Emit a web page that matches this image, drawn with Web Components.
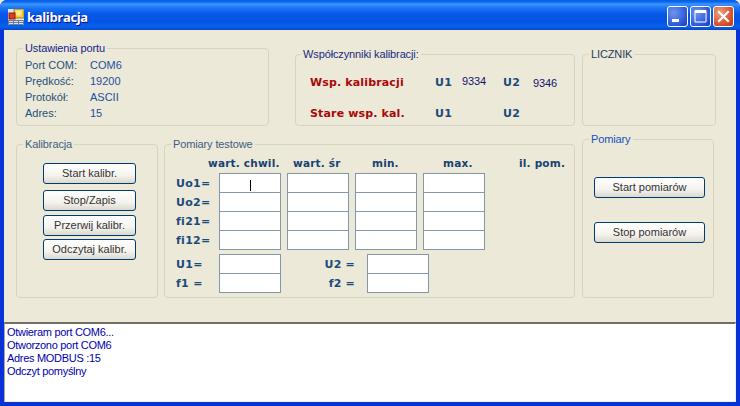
<!DOCTYPE html>
<html><head><meta charset="utf-8"><style>
html,body{margin:0;padding:0;background:#ece9d8}
body{width:740px;height:406px;overflow:hidden;font:11px/16px "Liberation Sans",Arial,sans-serif}
</style></head><body>
<xp-window title-text="kalibracja">
  <xp-row style="--h:79px;--top:18px">
    <xp-group legend="Ustawienia portu" style="--x:12px;--w:253px;--ht:78px;--lc:#14248a">
      <xp-port></xp-port>
    </xp-group>
    <xp-group legend="Współczynniki kalibracji:" style="--x:26px;--w:280px;--ht:72px;--mt:6px;--lc:#1a2a80;--lx:5px">
      <xp-coeffs></xp-coeffs>
    </xp-group>
    <xp-group legend="LICZNIK" style="--x:7px;--w:134px;--ht:72px;--mt:6px;--lc:#2a3a5a"></xp-group>
  </xp-row>
  <xp-row style="--h:159px;--top:12px">
    <xp-group legend="Kalibracja" style="--x:12px;--w:142px;--ht:154px;--mt:5px;--lc:#3d5f80">
      <xp-stack style="--pl:26px;--pt:18px">
        <xp-btn style="--w:93px;--mt:0px">Start kalibr.</xp-btn>
        <xp-btn style="--w:93px;--mt:6px">Stop/Zapis</xp-btn>
        <xp-btn style="--w:93px;--mt:4px">Przerwij kalibr.</xp-btn>
        <xp-btn style="--w:93px;--mt:3px">Odczytaj kalibr.</xp-btn>
      </xp-stack>
    </xp-group>
    <xp-group legend="Pomiary testowe" style="--x:6px;--w:411px;--ht:154px;--mt:5px;--lc:#3d5f80">
      <xp-tests></xp-tests>
    </xp-group>
    <xp-group legend="Pomiary" style="--x:7px;--w:132px;--ht:159px;--lc:#1550c0">
      <xp-stack style="--pl:11px;--pt:37px">
        <xp-btn style="--w:111px">Start pomiarów</xp-btn>
        <xp-btn style="--w:111px;--mt:24px">Stop pomiarów</xp-btn>
      </xp-stack>
    </xp-group>
  </xp-row>
  <xp-log slot="log">
    <div>Otwieram port COM6...</div>
    <div>Otworzono port COM6</div>
    <div>Adres MODBUS :15</div>
    <div>Odczyt pomyślny</div>
  </xp-log>
</xp-window>
<script>
function def(name,css,html,init){
  customElements.define(name,class extends HTMLElement{
    constructor(){super();const r=this.attachShadow({mode:"open"});
      r.innerHTML="<style>"+css+"</style>"+(typeof html==="function"?html(this):html);}
    connectedCallback(){if(init)init(this)}
  });
}
def("xp-window",`
:host{display:flex;flex-direction:column;width:740px;height:406px;box-sizing:border-box;background:#0831d9;border-radius:7px 7px 0 0;overflow:hidden}
.t{flex:none;height:30px;display:flex;align-items:center;padding:0 6px 0 8px;
 background:linear-gradient(#0a5ae0 0,#0a6af0 2px,#3c95ff 4px,#1a74f4 8px,#0858e8 14px,#0454e4 22px,#0662f0 26px,#0a50d8 29px,#0a40c0 30px);
 color:#fff;font:bold 13px/16px "Open Sans","Liberation Sans",sans-serif;letter-spacing:-.35px;text-shadow:1px 1px #0f1089}
.t svg.i{flex:none;margin-right:3px;margin-top:3px}
.t span{flex:1;margin-top:4px}
.b{flex:none;width:21px;height:21px;margin-left:2px;box-sizing:border-box;border:1px solid #fff;border-radius:3px;margin-top:2px;display:block;
 background:radial-gradient(circle at 30% 30%,#6f96ee,#2a56d8 70%,#1c3fb8)}
.b.c{background:radial-gradient(circle at 30% 30%,#eea080,#d8502c 65%,#b83c18)}
.b svg{display:block}
.f{flex:1;display:flex;flex-direction:column;margin:0 4px 4px;background:#ece9d8;min-height:0}
.m{flex:none;height:292px;display:flex;flex-direction:column}
`,h=>`<div class="t"><svg class="i" width="16" height="16" viewBox="0 0 16 16">
<rect x="0" y="0" width="16" height="16" fill="#dfe6ee"/>
<rect x="6" y="0" width="10" height="9" fill="#f7c83a" stroke="#a8801c"/>
<rect x="7.5" y="1.5" width="6" height="5" fill="#ffe98a"/>
<rect x="1" y="4" width="6" height="6" fill="#e03a22" stroke="#8a2010"/>
<path d="M0.5 11.5H15.5V15.5H0.5ZM5.5 11.5V15.5M10.5 11.5V15.5M0.5 13.5H15.5" fill="#d8e0ea" stroke="#6a7c98"/>
</svg><span>${h.getAttribute("title-text")}</span>
<i class="b"><svg width="19" height="19"><rect x="4" y="12" width="7" height="3" fill="#fff"/></svg></i>
<i class="b"><svg width="19" height="19"><path d="M4 3.5H15V15H4Z M4.5 5.5H14.5" fill="none" stroke="#fff" stroke-width="1"/><rect x="4" y="3" width="11" height="3" fill="#fff"/></svg></i>
<i class="b c"><svg width="19" height="19"><path d="M5 5L14 14M14 5L5 14" stroke="#fff" stroke-width="2.2" stroke-linecap="square" fill="none"/></svg></i>
</div><div class="f"><div class="m"><slot></slot></div><slot name="log"></slot></div>`);
def("xp-row",`:host{display:flex;flex:none;height:var(--h);padding-top:var(--top);box-sizing:content-box}`,`<slot></slot>`);
def("xp-group",`
:host{display:block;flex:none;position:relative;box-sizing:border-box;width:var(--w);height:var(--ht);margin-left:var(--x);margin-top:var(--mt,0);border:1px solid #d6d3c0;border-radius:4px}
.l{position:absolute;left:var(--lx,6px);top:-8px;padding:0 2px;background:#ece9d8;color:var(--lc);white-space:nowrap;line-height:14px;letter-spacing:-.12px}
`,h=>`<div class="l">${h.getAttribute("legend")}</div><slot></slot>`);
def("xp-stack",`:host{display:flex;flex-direction:column;align-items:flex-start;padding:var(--pt) 0 0 var(--pl)}`,`<slot></slot>`);
def("xp-btn",`
:host{display:block;flex:none;box-sizing:border-box;width:var(--w);height:21px;margin-top:var(--mt,0);border:1px solid #003c74;border-radius:3px;
 background:linear-gradient(#fff,#f4f3ee 60%,#dcd8cc);text-align:center;line-height:19px;color:#333;white-space:nowrap}
`,`<slot></slot>`);
def("xp-port",`
:host{display:grid;grid-template-columns:65px auto;grid-auto-rows:16px;padding:8px 0 0 8px;color:#23527c}
b{font-weight:400;color:#1e4ea0}`,
`<span>Port COM:</span><b>COM6</b><span>Prędkość:</span><b>19200</b><span>Protokół:</span><b>ASCII</b><span>Adres:</span><b>15</b>`);
def("xp-coeffs",`
:host{display:grid;grid-template-columns:125px 27px 41px 30px auto;grid-template-rows:16px 16px;row-gap:15px;padding:20px 0 0 14px;
 font:bold 11px/16px "DejaVu Sans",Verdana,sans-serif;align-items:center}
.r{color:#a80808;letter-spacing:.15px}
.u{color:#1c4a7c;font-size:11px;letter-spacing:.2px}
.v{font:11px/16px "Liberation Sans",sans-serif;color:#14146e;letter-spacing:-.1px}
.v.a{margin-top:-4px}.v.d{margin-top:-1px}`,
`<span class="r">Wsp. kalibracji</span><span class="u">U1</span><span class="v a">9334</span><span class="u">U2</span><span class="v d">9346</span>
<span class="r">Stare wsp. kal.</span><span class="u">U1</span><span></span><span class="u">U2</span><span></span>`);
def("xp-cells",`:host{display:block;position:relative;box-sizing:border-box;width:62px;flex:none}
i{display:block;box-sizing:border-box;height:20px;margin-top:-1px;border:1px solid #8496ab;background:#fff}
i:first-child{margin-top:0}
u{position:absolute;left:31px;top:6px;width:1px;height:11px;background:#000}`,
h=>{let s="";for(let k=0;k<+h.getAttribute("n");k++)s+="<i></i>";return s+(h.hasAttribute("caret")?"<u></u>":"")});
def("xp-tests",`
:host{display:block;padding:10px 0 0 11px;font:bold 11px/16px "DejaVu Sans",Verdana,sans-serif;color:#1c4a7c}
.h{display:flex;height:16px;font-size:10.5px;letter-spacing:.2px;color:#174272;white-space:nowrap}
.h span{flex:none}
.g{display:flex;margin-top:3px}
.lab{flex:none;width:43px;display:flex;flex-direction:column}
.lab span{height:19px;line-height:19px;letter-spacing:.3px}
.cols{display:flex;gap:6px}
.s{display:flex;margin-top:5px}
.lab2{flex:none;display:flex;flex-direction:column;text-align:right}
.lab2 span{height:19px;line-height:19px;letter-spacing:.2px}
`,`<div class="h"><span style="margin-left:32px;width:85px">wart. chwil.</span><span style="width:79px">wart. śr</span><span style="width:71px">min.</span><span style="width:76px">max.</span><span>il. pom.</span></div>
<div class="g"><div class="lab"><span>Uo1=</span><span>Uo2=</span><span>fi21=</span><span>fi12=</span></div>
<div class="cols"><xp-cells n="4" caret></xp-cells><xp-cells n="4"></xp-cells><xp-cells n="4"></xp-cells><xp-cells n="4"></xp-cells></div></div>
<div class="s"><div class="lab"><span>U1=</span><span>f1 =</span></div><xp-cells n="2"></xp-cells>
<div class="lab2" style="width:74px"><span>U2 =</span><span>f2 =</span></div><xp-cells n="2" style="margin-left:12px"></xp-cells></div>`);
def("xp-log",`
:host{display:block;flex:1;box-sizing:border-box;border-top:2px solid #716f64;border-left:1px solid #aca899;border-right:1px solid #f1efe2;border-bottom:1px solid #f1efe2;background:#fff;
 padding:2px 0 0 2px;color:#0000b0;line-height:13px;letter-spacing:-.3px}`,`<slot></slot>`);
</script>
</body></html>
